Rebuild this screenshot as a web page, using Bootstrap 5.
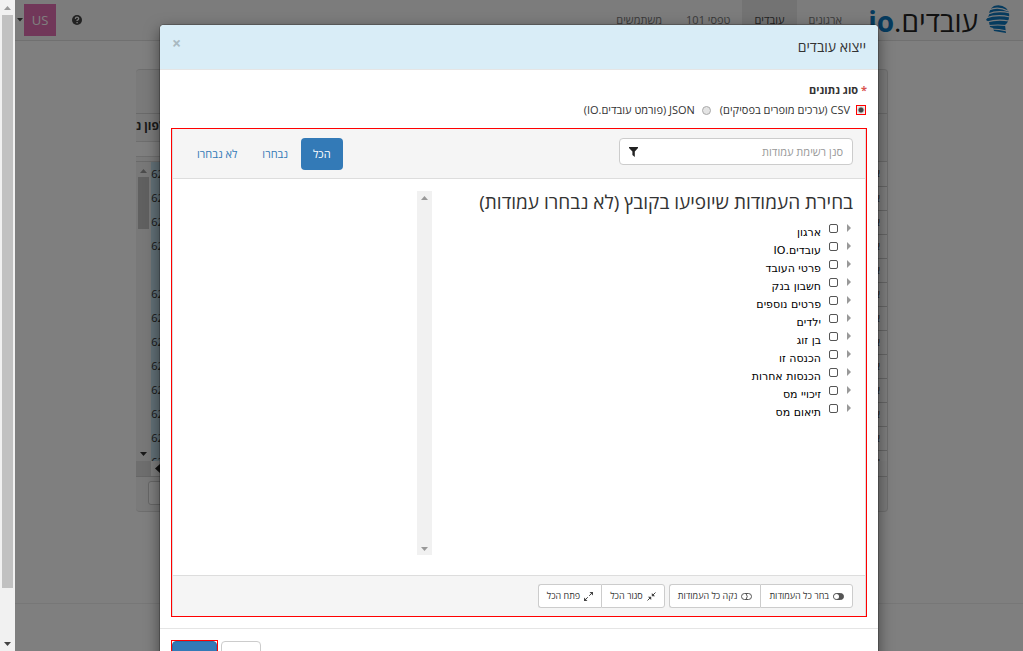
<!DOCTYPE html>
<html lang="he" dir="rtl">
<head>
<meta charset="utf-8">
<meta name="viewport" content="width=device-width, initial-scale=1">
<title>ייצוא עובדים</title>
<link href="https://cdn.jsdelivr.net/npm/bootstrap@5.3.0/dist/css/bootstrap.min.css" rel="stylesheet">
<style>
body { font: 11px/16px "Open Sans", "Noto Sans", sans-serif; color: #333; background: #fff; }
.page-scroll { width: 15px; background: #f1f1f1; padding: 6px 2px 5px; }
.page-scroll .thumb { width: 11px; height: calc(100% - 67px); margin-top: 5px; background: #c1c1c1; }
.app { min-width: 0; }
.topbar { height: 41px; background: #f8f8f8; border-bottom: 1px solid #e0e0e0; padding: 0 13px 0 0; }
.topbar .nav-link { color: #777; padding: 12px 12px; line-height: 16px; }
.topbar .nav-link.active { background: #e7e7e7; color: #444; }
.brand { font-size: 28px; line-height: 42px; color: #222; width: 156px; text-decoration: none; gap: 8px; white-space: nowrap; }
.brand b { color: #0d76bd; font-family: "Liberation Sans Narrow", "Open Sans", sans-serif; }
.brand svg { margin-top: 5px; }
.top-tools { height: 40px; }
.user-box { width: 32px; height: 32px; background: #e36fb2; color: #fff; font-size: 13px; line-height: 32px; border: 0; padding: 0; }
.grid-wrap { padding: 28px 135px 0 121px; }
.grid-panel { border: 1px solid #ddd; border-left: 0; border-radius: 4px; background: #f5f5f5; overflow: hidden; }
.grid-title { height: 44px; border-bottom: 1px solid #d4d4d4; }
.grid-head { height: 47px; background: #f5f5f5; }
.grid-head .phone-head { height: 28px; width: 40px; overflow: hidden; white-space: nowrap; font-weight: 700; font-size: 12px; line-height: 24px; border-bottom: 1px solid #ddd; text-align: left; }
.grid-head .phone-filter { height: 15px; width: 40px; background: #fff; border-bottom: 1px solid #ddd; }
.grid-rows { height: 300px; overflow: hidden; border-top: 1px solid #d4d4d4; }
.grid-rows table { width: 100%; table-layout: fixed; border-collapse: collapse; background: #fff; }
.grid-rows td { height: 24px; line-height: 22px; padding: 0 7px 1px 0; border-bottom: 1px solid #ccc; }
.grid-rows td.phone { width: 40px; padding: 0 0 1px; background: #c4e0ee; text-align: left; direction: ltr; text-indent: -3px; border-bottom: 0; overflow: hidden; }
.grid-scroll { width: 15px; background: #f1f1f1; padding: 7px 0 5px; }
.grid-scroll .thumb { width: 11px; height: 52px; background: #c1c1c1; }
.grid-hscroll { height: 16px; border-bottom: 1px solid #ccc; background: #fafafa; }
.grid-hscroll .corner { width: 15px; background: #dcdcdc; }
.grid-foot { height: 34px; padding: 4px 12px; }
.grid-foot button { width: 40px; height: 24px; border: 1px solid #ccc; border-radius: 3px; background: #fff; }
.page-foot { border-top: 1px solid #eee; margin-top: 91px; height: 60px; }
.app .modal-backdrop { position: absolute; width: 100%; height: 100%; z-index: 2; }
.app .modal { position: absolute; z-index: 3; overflow: hidden; }
.export-dialog { width: 718px; max-width: calc(100% - 20px); margin: 25px auto 0; }
.export-dialog .modal-content { border: 0; border-radius: 4px; box-shadow: 0 5px 15px rgba(0,0,0,.5), 0 0 0 1px rgba(0,0,0,.2); color: #333; }
.export-dialog .modal-header { background: #d9edf7; border-bottom: 1px solid #e5e5e5; padding: 10px 12px; height: 45px; border-radius: 4px 4px 0 0; align-items: flex-start; }
.export-dialog h1 { font-size: 14px; line-height: 24px; margin: 0; font-weight: 400; }
.close-x { border: 0; background: none; padding: 0; font: 700 16px/16px "Open Sans", sans-serif; color: #a9b9c1; }
.export-dialog .modal-body { padding: 12px 11px 11px; }
.export-dialog .modal-footer { border-top: 1px solid #e5e5e5; padding: 12px; justify-content: flex-end; gap: 4px; }
.export-dialog .modal-footer > * { margin: 0; }
.field-name { font-weight: 700; line-height: 16px; margin: 0; }
.field-name i { color: #d9534f; font-style: normal; }
.kinds { height: 24px; gap: 9px; padding-right: 2px; }
.kinds label { display: flex; align-items: center; gap: 7px; }
.kinds input { appearance: none; width: 9px; height: 9px; margin: 0; border: 1px solid #aaa; border-radius: 50%; background: #e4e4e4; }
.kinds input:checked { width: 8px; height: 8px; border: 0; border-radius: 0; background: radial-gradient(circle, #444 0 2px, #ccc 3px, #eee 4px); outline: 1px solid red; }
.columns-box { outline: 1px solid red; outline-offset: -1px; padding: 1px; margin-top: 6px; }
.columns-panel { border: 1px solid #ddd; border-width: 0 1px; }
.columns-top { background: #f5f5f5; border-bottom: 1px solid #ddd; height: 50px; padding: 9px 12px; margin: 0; align-items: flex-start; }
.search { width: 234px; height: 27px; border: 1px solid #ccc; border-radius: 4px; background: #fff; padding: 0 9px; }
.search input { border: 0; outline: 0; background: none; min-width: 0; color: #333; }
.search input::placeholder { color: #999; }
.columns-top .nav { gap: 1px; }
.columns-top .nav-link { font-size: 11px; line-height: 16px; padding: 8px 12px; color: #337ab7; border-radius: 4px; }
.columns-top .nav-link.active { background: #337ab7; color: #fff; }
.columns-body { padding: 12px 12px 20px; }
.columns-body h2 { font-size: 19px; line-height: 22px; margin: 0 0 6px; font-weight: 400; }
.tree-side { width: 63%; min-height: 364px; }
.tree-scroll { width: 15px; background: #f1f1f1; padding: 5px 0 4px; }
.tree { padding: 0 1px 0 0; margin: 0; }
.tree li { height: 18px; gap: 8px; }
.tree input { appearance: none; width: 9px; height: 9px; margin: 5px 0 0; border: 1px solid #555; border-radius: 2px; }
.tree svg { margin-top: 5px; }
.tree label { font: 11px/16px "DejaVu Sans", sans-serif; color: #000; padding-top: 6px; }
.columns-foot { background: #f5f5f5; border-top: 1px solid #ddd; padding: 8px 12px; gap: 4px; }
.tool { font-size: 9px; line-height: 16px; padding: 3px 8px; border: 1px solid #ccc; background: #fff; color: #333; display: flex; align-items: center; gap: 4px; }
.tool-pair { display: flex; }
.tool-pair .tool:first-child { border-radius: 0 3px 3px 0; }
.tool-pair .tool:last-child { border-radius: 3px 0 0 3px; border-right: 0; }
.act { height: 30px; font-size: 11px; line-height: 16px; padding: 6px 10px; border: 1px solid #ccc; border-radius: 4px; background: #fff; color: #333; }
.act-go { background: #337ab7; border-color: #2e6da4; color: #fff; padding: 6px 11px; }
.marked { outline: 1px solid red; }
</style>
<script src="https://cdn.jsdelivr.net/npm/bootstrap@5.3.0/dist/js/bootstrap.bundle.min.js"></script>
</head>
<body class="d-flex vh-100 overflow-hidden">
<div class="app position-relative flex-grow-1 overflow-hidden">
  <header class="topbar d-flex align-items-start justify-content-between">
    <div class="d-flex">
      <a class="brand d-flex" href="#">
        <svg width="24" height="29" viewBox="0 0 24 29">
          <path d="M8 1Q15-1 20 3Q24 7 23 13Q22 18 19 20L20 28L8 26L7 23L4 22L3 17L0 15L3 10Q3 4 8 1z" fill="#0d76bd"/>
          <path d="M3 5q9-4 19 1M2 9q10-4 22-1M0 13q11-4 24-1M1 17q10-3 22-1M3 20.500q9-1 17 0M5 24q8 0 16 2" fill="none" stroke="#f8f8f8" stroke-width="1.200"/>
        </svg>
        <span>עובדים.<b>io</b></span>
      </a>
      <nav class="nav">
        <a class="nav-link" href="#">ארגונים</a>
        <a class="nav-link active" href="#">עובדים</a>
        <a class="nav-link" href="#">טפסי 101</a>
        <a class="nav-link" href="#">משתמשים</a>
      </nav>
    </div>
    <div class="top-tools d-flex align-items-center">
      <svg width="10" height="10" viewBox="0 0 10 10"><circle cx="5" cy="5" r="5" fill="#444"/><path d="M3.3 3.8Q3.5 2.2 5 2.2T6.700 3.700Q6.700 4.500 5.100 5.300V6M5.100 7v1.300" fill="none" stroke="#f8f8f8" stroke-width="1.300"/></svg>
      <span class="px-2"></span>
      <button class="user-box" type="button">US</button>
      <svg width="9" height="4" viewBox="0 0 9 4"><path d="M2 0h6L5 3.500z" fill="#444"/></svg>
    </div>
  </header>

  <div class="grid-wrap">
    <div class="grid-panel">
      <div class="grid-title"></div>
      <div class="grid-head d-flex justify-content-end">
        <div><div class="phone-head">לפון נ</div><div class="phone-filter"></div></div>
      </div>
      <div class="grid-rows d-flex">
        <table>
          <tbody id="rows"></tbody>
        </table>
        <div class="grid-scroll d-flex flex-column align-items-center">
          <svg width="7" height="4" viewBox="0 0 7 4"><path d="M0 4h7L3.500 0z" fill="#999"/></svg>
          <div class="thumb mt-1 mb-auto"></div>
          <svg width="7" height="4" viewBox="0 0 7 4"><path d="M0 0h7L3.500 4z" fill="#333"/></svg>
        </div>
      </div>
      <div class="grid-hscroll d-flex justify-content-end align-items-stretch">
        <svg width="9" height="15" viewBox="0 0 9 15"><path d="M9 3L4 7.500L9 12z" fill="#222"/></svg>
        <div class="corner"></div>
      </div>
      <div class="grid-foot d-flex justify-content-end"><button type="button" aria-label="עמוד"></button></div>
    </div>
  </div>
  <footer class="page-foot"></footer>

  <div class="modal-backdrop show"></div>
  <div class="modal d-block" tabindex="-1" role="dialog">
    <div class="modal-dialog export-dialog">
      <div class="modal-content">
        <div class="modal-header d-flex justify-content-between">
          <h1>ייצוא עובדים</h1>
          <button class="close-x" type="button">×</button>
        </div>
        <div class="modal-body">
          <p class="field-name"><i>*</i> סוג נתונים</p>
          <div class="kinds d-flex align-items-center">
            <label><input type="radio" name="kind" checked>CSV (ערכים מופרים בפסיקים)</label>
            <label><input type="radio" name="kind">JSON (פורמט עובדים.IO)</label>
          </div>
          <div class="columns-box">
            <div class="columns-panel">
              <div class="columns-top d-flex justify-content-between">
                <div class="search d-flex align-items-center justify-content-between">
                  <input class="flex-grow-1 p-0" type="text" placeholder="סנן רשימת עמודות" aria-label="סנן רשימת עמודות">
                  <svg width="9" height="10" viewBox="0 0 9 10"><path d="M0 0h9v1L5.800 4.500V10L3.400 8V4.500L0 1z" fill="#222"/></svg>
                </div>
                <nav class="nav">
                  <a class="nav-link active" href="#">הכל</a>
                  <a class="nav-link" href="#">נבחרו</a>
                  <a class="nav-link" href="#">לא נבחרו</a>
                </nav>
              </div>
              <div class="columns-body d-flex">
                <div class="tree-side">
                  <h2>בחירת העמודות שיופיעו בקובץ (לא נבחרו עמודות)</h2>
                  <ul class="tree" id="tree"></ul>
                </div>
                <div class="tree-scroll d-flex flex-column align-items-center justify-content-between">
                  <svg width="7" height="4" viewBox="0 0 7 4"><path d="M0 4h7L3.500 0z" fill="#999"/></svg>
                  <svg width="7" height="4" viewBox="0 0 7 4"><path d="M0 0h7L3.500 4z" fill="#999"/></svg>
                </div>
              </div>
              <div class="columns-foot d-flex">
                <div class="tool-pair">
                  <button class="tool" type="button"><svg width="11" height="7" viewBox="0 0 11 7"><rect x=".5" y=".5" width="10" height="6" rx="3" fill="#555" stroke="#555"/><circle cx="3.500" cy="3.500" r="2.500" fill="#fff"/></svg>בחר כל העמודות</button>
                  <button class="tool" type="button"><svg width="11" height="7" viewBox="0 0 11 7" fill="none" stroke="#555"><rect x=".5" y=".5" width="10" height="6" rx="3"/><path d="M5 .5q2.500 3 0 6"/></svg>נקה כל העמודות</button>
                </div>
                <div class="tool-pair">
                  <button class="tool" type="button"><svg width="9" height="9" viewBox="0 0 9 9"><path d="M8.500 .5L5 4M.5 8.500L4 5" stroke="#444"/><path d="M4.800 1v3.300h3.300zM4.200 8V4.700H.9z" fill="#444"/></svg>סגור הכל</button>
                  <button class="tool" type="button"><svg width="9" height="9" viewBox="0 0 9 9"><path d="M8 1L5.200 3.800M1 8l2.800-2.800" stroke="#444"/><path d="M5.500 0H9v3.500zM0 5.500V9h3.500z" fill="#444"/></svg>פתח הכל</button>
                </div>
              </div>
            </div>
          </div>
        </div>
        <div class="modal-footer d-flex">
          <button class="act" type="button">בטל</button>
          <div class="marked d-flex"><button class="act act-go" type="button">ייצוא</button></div>
        </div>
      </div>
    </div>
  </div>
</div>
<div class="page-scroll d-flex flex-column align-items-center">
  <svg width="7" height="4" viewBox="0 0 7 4"><path d="M0 4h7L3.500 0z" fill="#999"/></svg>
  <div class="thumb mb-auto"></div>
  <svg width="7" height="4" viewBox="0 0 7 4"><path d="M0 0h7L3.500 4z" fill="#444"/></svg>
</div>
<script>
const groups = ['ארגון', 'עובדים.IO', 'פרטי העובד', 'חשבון בנק', 'פרטים נוספים', 'ילדים', 'בן זוג', 'הכנסה זו', 'הכנסות אחרות', 'זיכויי מס', 'תיאום מס'];
document.getElementById('tree').innerHTML = groups.map((name, i) =>
  `<li class="d-flex align-items-start"><svg width="6" height="8" viewBox="0 0 6 8"><path d="M1 0v8l4-4z" fill="#999"/></svg><input type="checkbox" id="g${i}"><label for="g${i}">${name}</label></li>`).join('');
document.getElementById('rows').innerHTML = Array.from({ length: 13 }, (_, i) =>
  `<tr><td>א</td><td class="phone">${i === 4 ? '' : '-62'}</td></tr>`).join('');
</script>
</body>
</html>
